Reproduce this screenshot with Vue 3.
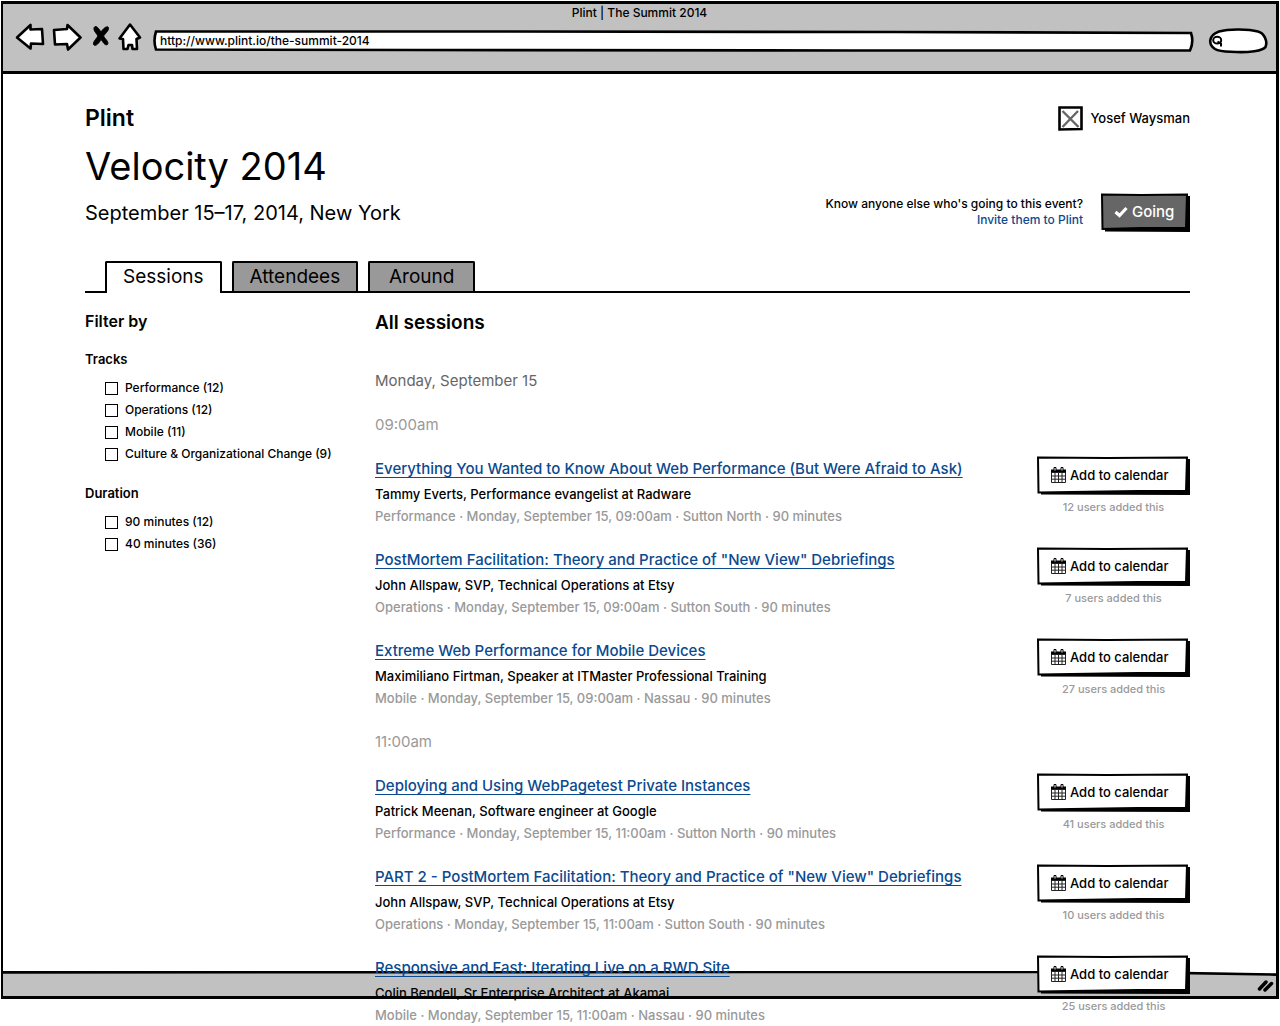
<script setup>
import { ref } from 'vue'

const address = ref('http://www.plint.io/the-summit-2014')
const query = ref('')
const activeTab = ref('Sessions')
const tabs = ['Sessions', 'Attendees', 'Around']

const filters = [
  {
    name: 'Tracks',
    options: ['Performance (12)', 'Operations (12)', 'Mobile (11)', 'Culture & Organizational Change (9)'],
  },
  { name: 'Duration', options: ['90 minutes (12)', '40 minutes (36)'] },
]

const slots = [
  {
    time: '09:00am',
    sessions: [
      {
        title: 'Everything You Wanted to Know About Web Performance (But Were Afraid to Ask)',
        speaker: 'Tammy Everts, Performance evangelist at Radware',
        meta: 'Performance · Monday, September 15, 09:00am · Sutton North · 90 minutes',
        users: 12,
      },
      {
        title: 'PostMortem Facilitation: Theory and Practice of "New View" Debriefings',
        speaker: 'John Allspaw, SVP, Technical Operations at Etsy',
        meta: 'Operations · Monday, September 15, 09:00am · Sutton South · 90 minutes',
        users: 7,
      },
      {
        title: 'Extreme Web Performance for Mobile Devices',
        speaker: 'Maximiliano Firtman, Speaker at ITMaster Professional Training',
        meta: 'Mobile · Monday, September 15, 09:00am · Nassau · 90 minutes',
        users: 27,
      },
    ],
  },
  {
    time: '11:00am',
    sessions: [
      {
        title: 'Deploying and Using WebPagetest Private Instances',
        speaker: 'Patrick Meenan, Software engineer at Google',
        meta: 'Performance · Monday, September 15, 11:00am · Sutton North · 90 minutes',
        users: 41,
      },
      {
        title: 'PART 2 - PostMortem Facilitation: Theory and Practice of "New View" Debriefings',
        speaker: 'John Allspaw, SVP, Technical Operations at Etsy',
        meta: 'Operations · Monday, September 15, 11:00am · Sutton South · 90 minutes',
        users: 10,
      },
      {
        title: 'Responsive and Fast: Iterating Live on a RWD Site',
        speaker: 'Colin Bendell, Sr Enterprise Architect at Akamai',
        meta: 'Mobile · Monday, September 15, 11:00am · Nassau · 90 minutes',
        users: 25,
      },
    ],
  },
]
</script>

<template>
  <div class="browser">
    <header class="chrome">
      <div class="window-title">Plint | The Summit 2014</div>
      <div class="toolbar">
        <button class="nav back" type="button" aria-label="Back">
          <svg width="30" height="28" viewBox="0 0 30 28">
            <path d="M2 14.500 L15.500 2 L15.500 6.500 L27 6 L28 21 L16 20.500 L15.500 25.500 Z" />
          </svg>
        </button>
        <button class="nav forward" type="button" aria-label="Forward">
          <svg width="30" height="28" viewBox="0 0 30 28">
            <path d="M2 7 L15 6 L15.500 2 L28.500 14.500 L16 26.500 L15 21 L3 21.500 Z" />
          </svg>
        </button>
        <button class="nav stop" type="button" aria-label="Stop">
          <svg width="18" height="22" viewBox="0 0 18 22">
            <path class="solid" d="M3 0.500 C5 0 7 3 9 6 C11 3 14 0 16 1 C18 3 14 7 11.500 10 C14 14 17 16 15.500 18.500 C13 20 11 16 9 13.500 C7 17 4 20.500 2 19 C0 17 4 13 6 10 C4 7 0 3 3 0.500 Z" />
          </svg>
        </button>
        <button class="nav home" type="button" aria-label="Home">
          <svg width="24" height="29" viewBox="0 0 24 29">
            <path d="M12 1.500 L22 14.500 L18.500 16 L19 26 L14.500 26 L14 22 L10.500 22 L9.500 26 L5.500 26 L5 16 L1.500 15.500 Z" />
          </svg>
        </button>
        <label class="address">
          <svg class="outline" viewBox="0 0 1040 22" preserveAspectRatio="none" aria-hidden="true">
            <path d="M3 1.500 L350 1.500 L740 2 L1037 3 Q1040 12 1036 20.500 L700 20.500 L260 20 L3 19.500 Q0 11 3 1.500 Z" />
          </svg>
          <input v-model="address" type="text" aria-label="Address" />
        </label>
        <label class="search">
          <svg class="outline" viewBox="0 0 60 26" preserveAspectRatio="none" aria-hidden="true">
            <path d="M11 3.500 C21 0.500 41 1 50 3.500 C56 5 60 13 57.500 19 C55 23 40 24.500 28 24 C18 23.500 12 24 7 21 C1 17 -1 8 11 3.500 Z" />
          </svg>
          <svg class="lens" width="12" height="13" viewBox="0 0 12 13" aria-hidden="true">
            <ellipse cx="5.200" cy="5.200" rx="4" ry="3.400" />
            <path d="M5.500 6.500 L9 8.500 L9 11.500" />
          </svg>
          <input v-model="query" type="text" aria-label="Search" />
        </label>
      </div>
    </header>

    <main class="page">
      <div class="account-row">
        <a class="brand" href="#">Plint</a>
        <a class="account" href="#">
          <svg width="25" height="25" viewBox="0 0 25 25" aria-hidden="true">
            <path d="M1.500 1.500 L23.500 1.500 L23.500 23 L1.500 23.500 Z" fill="#fff" stroke="#000" stroke-width="2.600" />
            <path d="M4.500 5 L20.500 21 M20 5 L4.500 21" fill="none" stroke="#666" stroke-width="2.400" />
          </svg>
          Yosef Waysman
        </a>
      </div>

      <div class="event">
        <div>
          <h1>Velocity 2014</h1>
          <p class="dates">September 15–17, 2014, New York</p>
        </div>
        <div class="rsvp">
          <p>Know anyone else who's going to this event?<br /><a href="#">Invite them to Plint</a></p>
          <button class="sketch going" type="button">
            <svg class="outline" viewBox="0 0 89 39" preserveAspectRatio="none" aria-hidden="true">
              <path d="M4 35 L85 34 L86 3 L89 3 L89 39 L4 38.500 Z" fill="#000" />
              <path d="M1 1.500 L40 2 L86 1.500 L85 35 L40 35 L1.500 36 Z" fill="#666" stroke="#000" stroke-width="2" />
            </svg>
            <svg class="icon" width="14" height="12" viewBox="0 0 14 12" aria-hidden="true">
              <path d="M1.500 6 L5.500 9.500 L12.500 2" fill="none" stroke="#fff" stroke-width="3.200" />
            </svg>
            <span>Going</span>
          </button>
        </div>
      </div>

      <nav class="tabs" aria-label="Event">
        <button
          v-for="tab in tabs"
          :key="tab"
          type="button"
          :class="{ active: tab === activeTab }"
          @click="activeTab = tab"
        >
          {{ tab }}
        </button>
      </nav>

      <div class="columns">
        <aside>
          <h2 class="filter-title">Filter by</h2>
          <fieldset v-for="group in filters" :key="group.name">
            <legend>{{ group.name }}</legend>
            <label v-for="option in group.options" :key="option">
              <input type="checkbox" />
              <span>{{ option }}</span>
            </label>
          </fieldset>
        </aside>

        <section class="schedule">
          <h2>All sessions</h2>
          <h3 class="day">Monday, September 15</h3>
          <template v-for="slot in slots" :key="slot.time">
            <h4>{{ slot.time }}</h4>
            <article v-for="session in slot.sessions" :key="session.title">
              <div class="details">
                <a class="title" href="#">{{ session.title }}</a>
                <p>{{ session.speaker }}</p>
                <p class="muted">{{ session.meta }}</p>
              </div>
              <div class="action">
                <button class="sketch add" type="button">
                  <svg class="outline" viewBox="0 0 153 39" preserveAspectRatio="none" aria-hidden="true">
                    <path d="M4 35 L149 34 L150 3 L153 3 L153 39 L4 38.500 Z" fill="#000" />
                    <path d="M1 1.500 L70 2 L150 1.500 L149 35 L100 35 L1.500 36.500 Z" fill="#fff" stroke="#000" stroke-width="2" />
                  </svg>
                  <svg class="icon" width="15" height="16" viewBox="0 0 15 16" aria-hidden="true">
                    <path d="M0 2.500 H15 V6 H0 Z" fill="#000" />
                    <path d="M0.500 5.500 H14.500 V15.500 H0.500 Z M4 5.500 V15.500 M7.500 5.500 V15.500 M11 5.500 V15.500 M0.500 9 H14.500 M0.500 12.200 H14.500" fill="none" stroke="#222" />
                    <path d="M3 0.500 H5 V4 H3 Z M10 0.500 H12 V4 H10 Z" fill="#fff" stroke="#000" />
                  </svg>
                  <span>Add to calendar</span>
                </button>
                <p>{{ session.users }} users added this</p>
              </div>
            </article>
          </template>
        </section>
      </div>
    </main>

    <footer class="status">
      <svg class="outline" viewBox="0 0 1272 28" preserveAspectRatio="none" aria-hidden="true">
        <path d="M0 0 L1110 0 L1272 3 L1272 28 L0 28 Z" fill="#c1c1c1" />
        <path d="M0 1.500 L1110 1 L1272 4" fill="none" stroke="#000" stroke-width="3" />
      </svg>
      <svg class="grip" width="17" height="14" viewBox="0 0 17 14" aria-hidden="true">
        <path d="M2.500 10 L9 3 M8 11 L14.500 4.500" />
      </svg>
    </footer>
  </div>
</template>

<style>
body {
  margin: 0;
  background: #fff;
}
</style>

<style scoped>
.browser {
  margin: 1px 1px 27px;
  border: 3px solid #000;
  border-left-width: 2px;
  color: #000;
  font: 500 13px/22px Inter, "Noto Sans", sans-serif;
}

p,
h1,
h2,
h3,
h4 {
  margin: 0;
}

button {
  padding: 0;
  border: 0;
  background: none;
  color: inherit;
  font: inherit;
  cursor: pointer;
}

a {
  color: #0b4a8f;
  text-decoration: none;
}

.outline {
  position: absolute;
  inset: 0;
  width: 100%;
  height: 100%;
}

.chrome {
  background: #c1c1c1;
  border-bottom: 3px solid #000;
}

.window-title {
  text-align: center;
  font-size: 12px;
  line-height: 18px;
}

.toolbar {
  display: flex;
  align-items: center;
  height: 30px;
  padding: 0 8px 19px 12px;
}

.nav {
  display: flex;
}

.nav path {
  fill: #fff;
  stroke: #000;
  stroke-width: 2.600;
  stroke-linejoin: round;
}

.nav path.solid {
  fill: #000;
  stroke-width: 1;
}

.forward {
  margin-left: 7px;
}

.stop {
  margin-left: 10px;
}

.home {
  margin-left: 8px;
}

.address {
  position: relative;
  flex: 1;
  height: 22px;
  margin: 8px 0 0 11px;
}

.address path,
.search path {
  fill: #fff;
  stroke: #000;
  stroke-width: 2.600;
}

.address input,
.search input {
  position: relative;
  display: block;
  box-sizing: border-box;
  width: 100%;
  height: 100%;
  padding: 0 7px 2px;
  border: 0;
  outline: 0;
  background: none;
  color: #000;
  font: 500 12px/20px Inter, "Noto Sans", sans-serif;
}

.search {
  position: relative;
  width: 60px;
  height: 26px;
  margin: 8px 0 0 14px;
}

.search input {
  padding: 0 8px 0 18px;
}

.lens {
  position: absolute;
  top: 7px;
  left: 4px;
}

.search .lens ellipse,
.search .lens path {
  fill: none;
  stroke: #000;
  stroke-width: 2;
}

.page {
  position: relative;
  z-index: 1;
  margin-bottom: -55px;
  padding: 28px 86px 0 82px;
}

.account-row {
  display: flex;
  justify-content: space-between;
  align-items: center;
  height: 32px;
}

.brand {
  color: #000;
  font-size: 23px;
  font-weight: 600;
}

.account {
  display: flex;
  align-items: center;
  gap: 7px;
  color: #000;
}

.event {
  display: flex;
  justify-content: space-between;
  align-items: flex-end;
  padding-top: 8px;
}

h1 {
  font-size: 38px;
  font-weight: 400;
  line-height: 48px;
}

.dates {
  font-size: 20px;
  font-weight: 400;
  line-height: 46px;
}

.rsvp {
  display: flex;
  align-items: center;
  gap: 18px;
  padding-bottom: 4px;
  text-align: right;
  font-size: 12px;
  line-height: 16px;
}

.rsvp p {
  padding-bottom: 2px;
}

.sketch {
  position: relative;
  display: flex;
  align-items: center;
  box-sizing: border-box;
  height: 39px;
  padding-bottom: 2px;
}

.sketch .icon,
.sketch span {
  position: relative;
}

.going {
  gap: 4px;
  width: 89px;
  padding-left: 13px;
  color: #fff;
  font-size: 15px;
}

.tabs {
  display: flex;
  gap: 10px;
  margin-top: 25px;
  padding-left: 20px;
  border-bottom: 2px solid #000;
}

.tabs button {
  height: 30px;
  min-width: 107px;
  padding: 0 16px;
  border: 2px solid #000;
  border-bottom: 0;
  border-radius: 2px 2px 0 0;
  background: #999;
  font-size: 19px;
  font-weight: 400;
}

.tabs .active {
  margin-bottom: -2px;
  height: 32px;
  padding-bottom: 2px;
  background: #fff;
}

.columns {
  display: flex;
  padding-top: 13px;
}

aside {
  flex: 0 0 290px;
}

.filter-title {
  font-size: 16px;
  font-weight: 600;
  line-height: 30px;
}

fieldset {
  margin: 12px 0 0;
  padding: 0;
  border: 0;
}

fieldset + fieldset {
  margin-top: 17px;
}

legend {
  margin-bottom: 7px;
  padding: 0;
  font-weight: 600;
}

fieldset label {
  display: flex;
  align-items: center;
  gap: 7px;
  height: 22px;
  padding-left: 20px;
  font-size: 12px;
}

input[type="checkbox"] {
  appearance: none;
  width: 13px;
  height: 13px;
  margin: 0;
  border: 1px solid #000;
  background: #fff;
}

input[type="checkbox"]:checked {
  background: #666;
}

.schedule {
  flex: 1;
  min-width: 0;
}

.schedule h2 {
  padding: 2px 0 28px;
  font-size: 19px;
  font-weight: 600;
  line-height: 30px;
}

.day,
h4 {
  margin-bottom: 14px;
  font-size: 15px;
  font-weight: 400;
  line-height: 30px;
}

.day {
  color: #666;
}

h4 {
  color: #999;
}

article {
  display: flex;
  justify-content: space-between;
  margin-bottom: 18px;
}

article:last-child {
  margin-bottom: 0;
}

.title {
  display: block;
  font-size: 15px;
  line-height: 29px;
  text-decoration: underline;
  text-decoration-thickness: 1px;
  text-decoration-skip-ink: none;
  text-underline-offset: 3px;
}

.muted {
  color: #999;
}

.action {
  flex: 0 0 153px;
  padding-top: 2px;
}

.action p {
  padding-top: 2px;
  color: #999;
  font-size: 11px;
  line-height: 20px;
  text-align: center;
}

.add {
  gap: 4px;
  width: 100%;
  padding-left: 14px;
}

.status {
  position: relative;
  height: 25px;
}

.grip {
  position: absolute;
  right: 2px;
  bottom: 3px;
  fill: none;
  stroke: #000;
  stroke-width: 3.500;
  stroke-linecap: round;
}
</style>
